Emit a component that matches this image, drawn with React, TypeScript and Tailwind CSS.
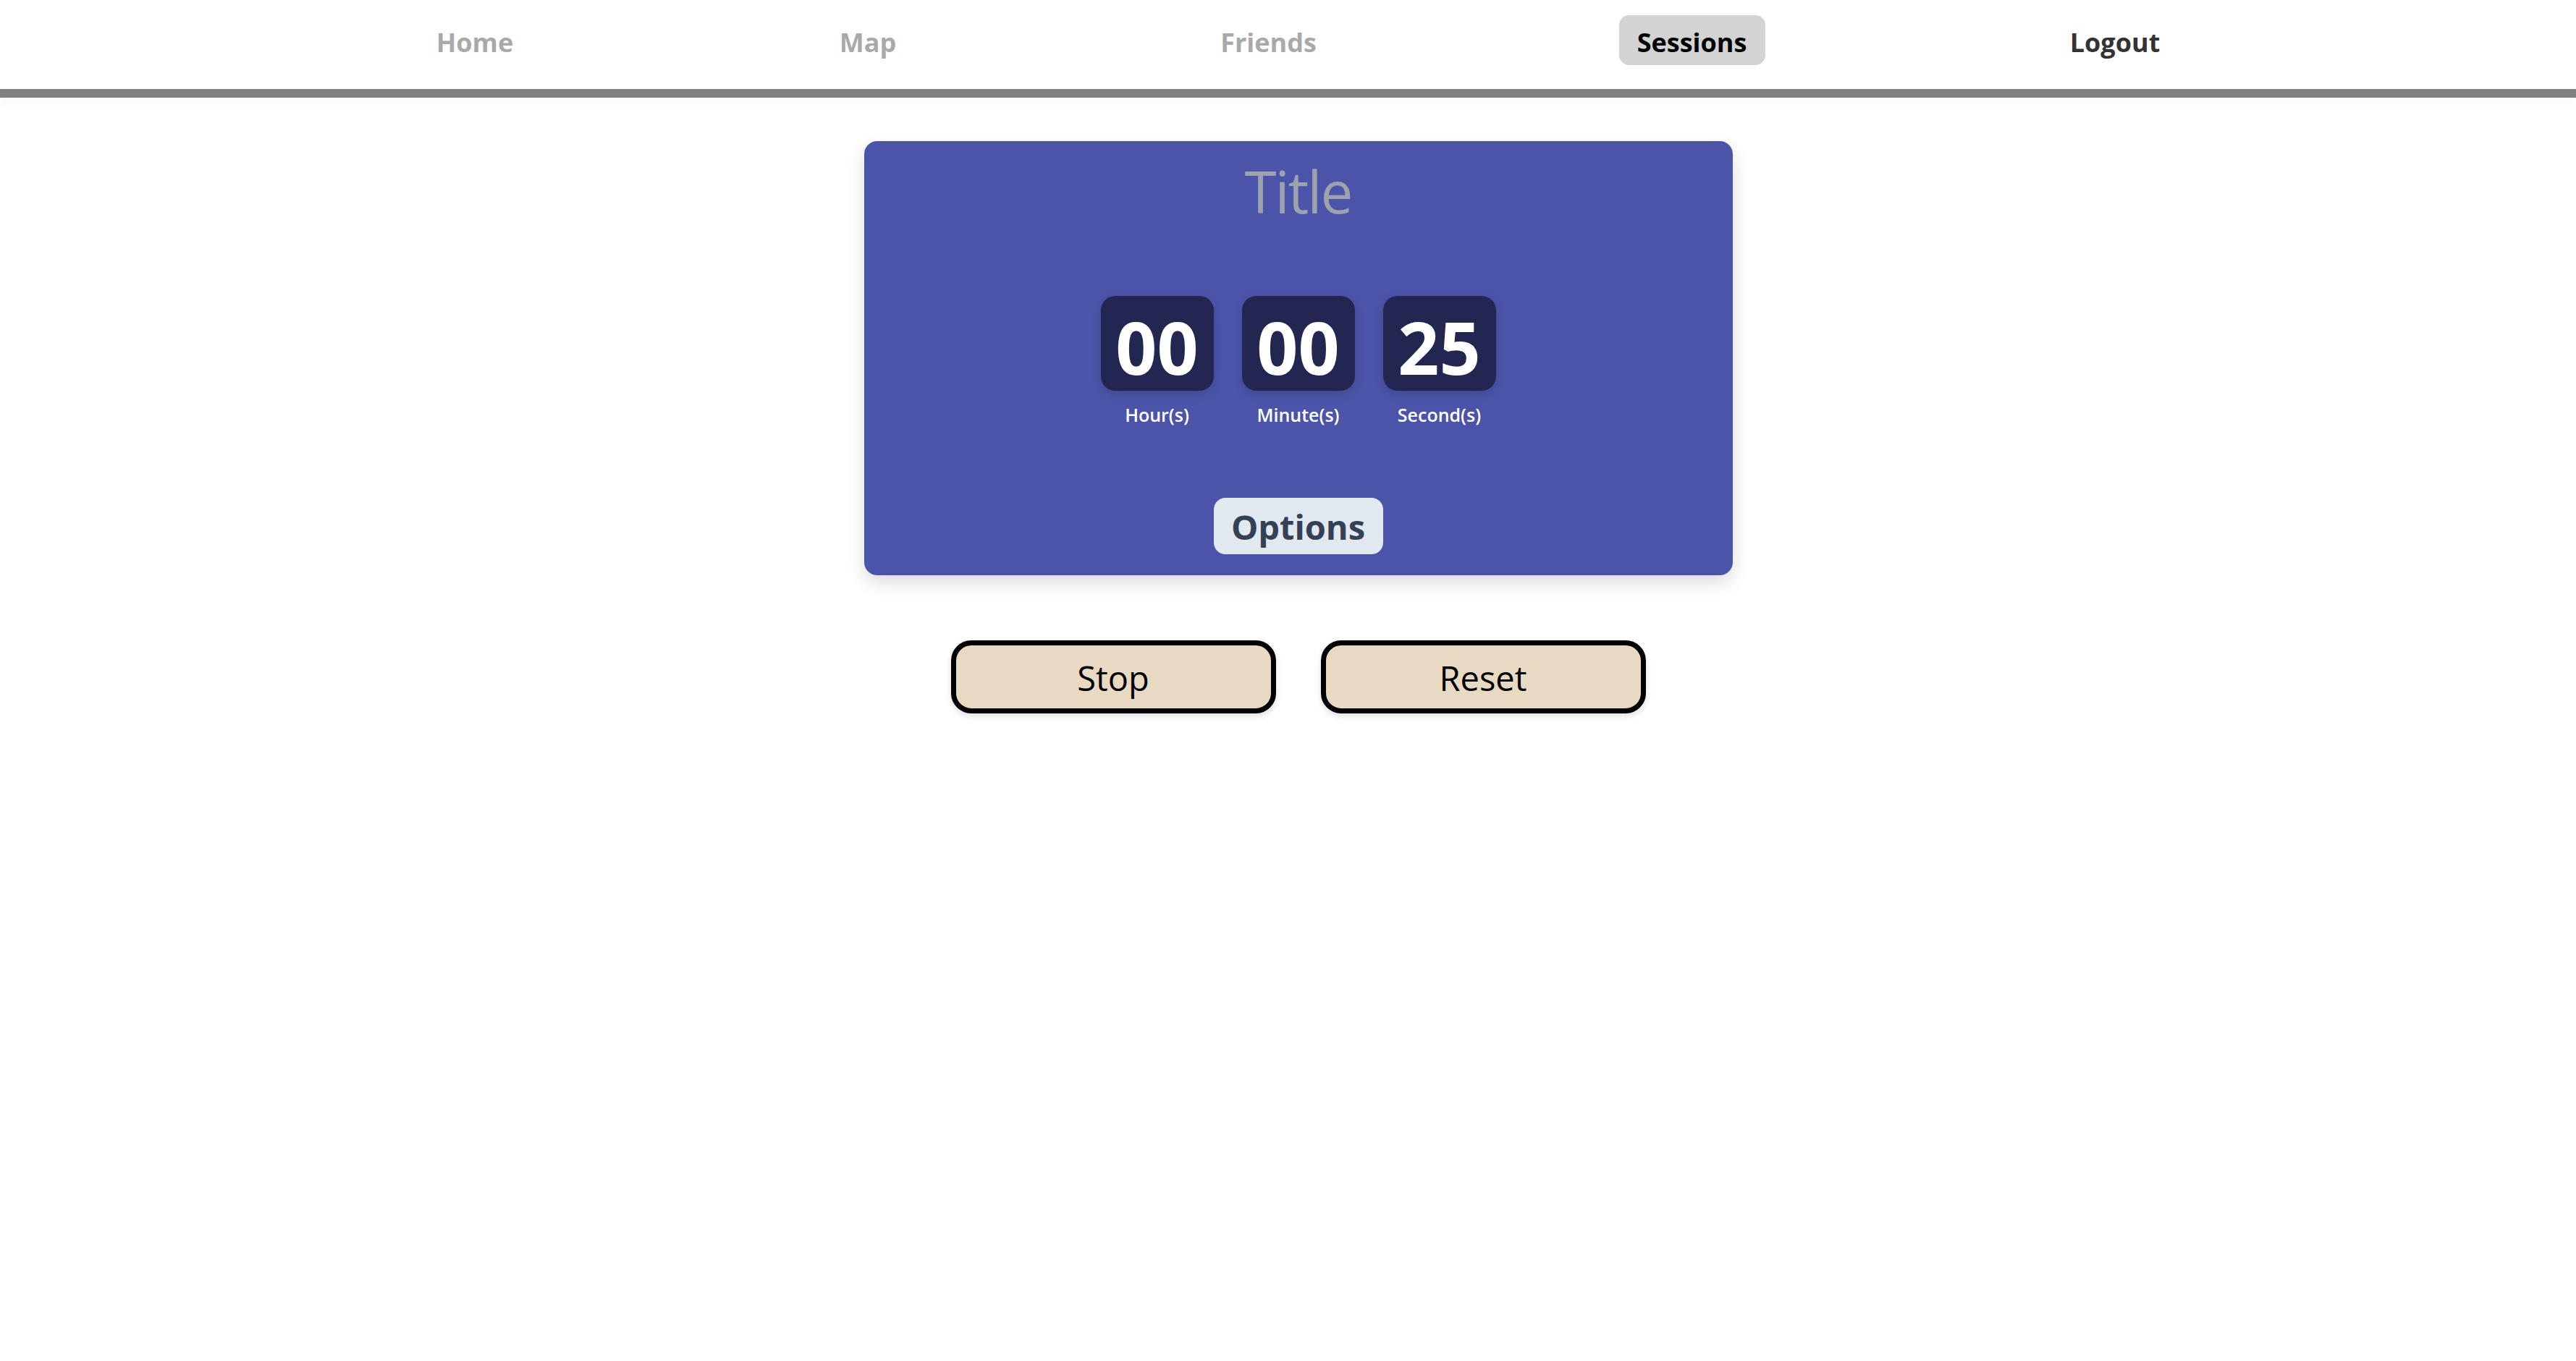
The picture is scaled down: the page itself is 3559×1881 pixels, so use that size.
import { useState } from 'react'

const links = [
  { label: 'Home', w: 'w-[161px]' },
  { label: 'Map', w: 'w-[139px]' },
  { label: 'Friends', w: 'w-[182px]' },
  { label: 'Sessions', w: 'w-[202px]' },
  { label: 'Logout', w: 'w-[181px]' },
]

function NavBar({ active }: { active: string }) {
  return (
    <header>
      <nav className="flex justify-center gap-[393px] pl-[29px] pt-[21px] pb-[33px]">
        {links.map((l) => {
          const isActive = l.label === active
          const color = isActive
            ? 'bg-[#d3d3d3] text-black'
            : l.label === 'Logout'
              ? 'text-[#333333]'
              : 'text-[#a9a9a9]'
          return (
            <a
              key={l.label}
              href="#"
              className={`${l.w} ${color} h-[69px] pt-[20px] rounded-[14px] text-center text-[36px] leading-none font-bold`}
            >
              {l.label}
            </a>
          )
        })}
      </nav>
      <div className="h-[12px] bg-[#808080] shadow-[0_8px_18px_rgba(0,0,0,0.04)]" />
    </header>
  )
}

function TimeBox({ value, label }: { value: string; label: string }) {
  return (
    <div className="flex flex-col items-center">
      <div className="w-[156px] h-[131px] rounded-[20px] bg-[#232651] shadow-[0_4px_14px_rgba(0,0,0,0.14)] flex items-center justify-center pt-[8px]">
        <span className="text-white text-[100px] leading-none font-bold">{value}</span>
      </div>
      <span className="mt-[21px] text-white text-[25px] leading-none font-semibold">{label}</span>
    </div>
  )
}

export default function App() {
  const [title, setTitle] = useState('')

  return (
    <div className="min-h-screen bg-white font-['Segoe_UI','Open_Sans',sans-serif]">
      <NavBar active="Sessions" />

      <main className="flex flex-col items-center pl-[28px]">
        <section className="mt-[60px] w-[1200px] h-[600px] rounded-[18px] bg-[#4b54a8] shadow-[0_10px_24px_rgba(0,0,0,0.14)] flex flex-col items-center pt-[28px]">
          <input
            value={title}
            onChange={(e) => setTitle(e.target.value)}
            placeholder="Title"
            className="w-[800px] h-[80px] bg-transparent text-center text-[80px] leading-none font-normal tracking-[-2px] text-white placeholder:text-[#9ca3af] outline-none"
          />

          <div className="mt-[106px] flex gap-[39px]">
            <TimeBox value="00" label="Hour(s)" />
            <TimeBox value="00" label="Minute(s)" />
            <TimeBox value="25" label="Second(s)" />
          </div>

          <button className="mt-[102px] w-[234px] h-[78px] rounded-[16px] bg-[#e2e8f0] text-[#334155] text-[47px] leading-none font-bold flex items-center justify-center pt-[3px]">
            Options
          </button>
        </section>

        <div className="mt-[90px] flex gap-[62px]">
          {['Stop', 'Reset'].map((b) => (
            <button
              key={b}
              className="w-[449px] h-[101px] rounded-[28px] border-[7px] border-black bg-[#e8d9c3] text-black text-[47px] leading-none shadow-[0_4px_10px_rgba(0,0,0,0.12)] flex items-center justify-center pt-[4px]"
            >
              {b}
            </button>
          ))}
        </div>
      </main>
    </div>
  )
}
